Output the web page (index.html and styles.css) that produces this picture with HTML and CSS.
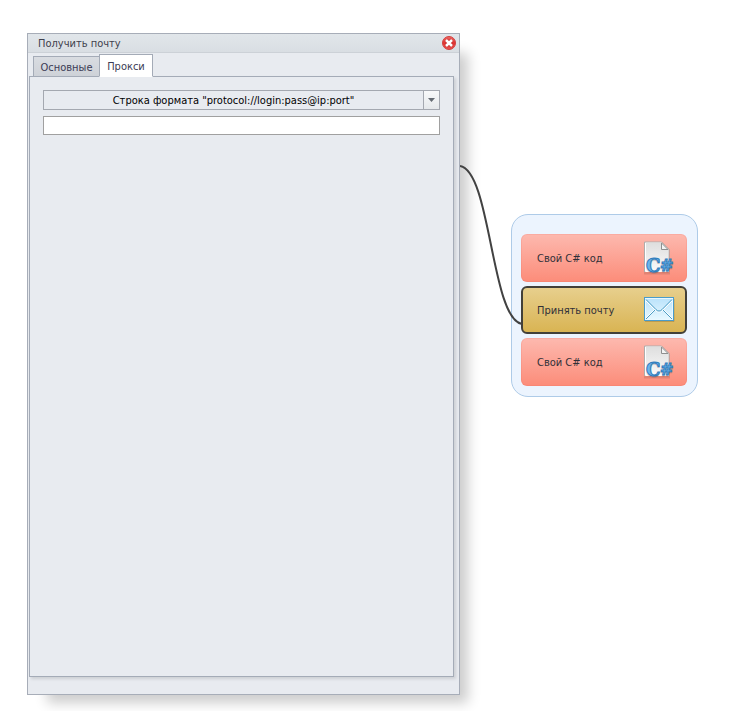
FILE: index.html
```html
<!DOCTYPE html>
<html lang="ru">
<head>
<meta charset="utf-8">
<title>Получить почту</title>
<link rel="stylesheet" href="styles.css">
</head>
<body>
<svg class="symbols" aria-hidden="true">
  <defs>
    <linearGradient id="paper" x1="0" y1="0" x2="0" y2="1">
      <stop offset="0" stop-color="#dedede"/><stop offset="1" stop-color="#fafafa"/>
    </linearGradient>
    <linearGradient id="sky" x1="0" y1="0" x2="0" y2="1">
      <stop offset="0" stop-color="#b9e2fb"/><stop offset="1" stop-color="#e9f9ff"/>
    </linearGradient>
    <linearGradient id="alarm" x1="0" y1="0" x2="0" y2="1">
      <stop offset="0" stop-color="#ee6a68"/><stop offset=".5" stop-color="#e03331"/><stop offset="1" stop-color="#ea5350"/>
    </linearGradient>
    <symbol id="code-icon" viewBox="0 0 32 34">
      <path d="M2.500 2.500H18.500L25.500 9.500V32H2.500Z" fill="none" stroke="#7a4038" stroke-opacity=".2" stroke-width="3"/>
      <path d="M2.500 1.500H18.500L25.500 8.500V30.500H2.500Z" fill="url(#paper)" stroke="#fff"/>
      <path d="M1.500 31V1H18.500L26 8.500V18" fill="none" stroke="#b0adac"/>
      <path d="M18.500 2V8.500H25Z" fill="#f4f4f4" stroke="#8f8f8f"/>
      <g class="sharp-shadow">
        <text x="3" y="32" font-size="18">C</text>
        <text x="17" y="31" font-size="16">#</text>
      </g>
      <g class="sharp-text">
        <text x="3" y="31" font-size="18">C</text>
        <text x="17" y="30" font-size="16">#</text>
      </g>
    </symbol>
    <symbol id="mail-icon" viewBox="0 0 32 28">
      <path d="M2 25.500H31V3" fill="none" stroke="#7d6430" stroke-opacity=".35"/>
      <rect x="1.500" y="1.500" width="29" height="23" fill="url(#sky)" stroke="#4a9ccb"/>
      <rect x="2.500" y="2.500" width="27" height="21" fill="none" stroke="#e9f8ff"/>
      <path d="M3 5L13 15Q14 16 16 16T19 15L29 5M3 22L11 14M29 22L21 14" fill="none" stroke="#fff"/>
      <path d="M3 3.500L13 13.500Q14 15 16 15T19 13.500L29 3.500M3 23L12 14M29 23L20 14" fill="none" stroke="#4d9dc4"/>
    </symbol>
  </defs>
</svg>

<main class="canvas">
  <section class="window" aria-labelledby="window-title">
    <header class="titlebar">
      <h1 class="title" id="window-title">Получить почту</h1>
      <button class="close" type="button" aria-label="Закрыть">
        <svg width="14" height="14" viewBox="0 0 14 14">
          <circle cx="7" cy="7" r="6.500" fill="url(#alarm)" stroke="#d0403e"/>
          <path d="M4 4L10 10M10 4L4 10" stroke="#a72020" stroke-opacity=".5" stroke-width="4"/>
          <path d="M4 4L10 10M10 4L4 10" stroke="#fff" stroke-width="2.500"/>
        </svg>
      </button>
    </header>
    <div class="tabs" role="tablist">
      <button class="tab" type="button" role="tab" aria-selected="false">Основные</button>
      <button class="tab tab-active" type="button" role="tab" aria-selected="true">Прокси</button>
    </div>
    <div class="panel" role="tabpanel">
      <div class="combo">
        <select class="combo-select" aria-label="Формат прокси">
          <option>Строка формата "protocol://login:pass@ip:port"</option>
        </select>
        <span class="combo-arrow"><svg width="7" height="4" viewBox="0 0 7 4"><path d="M0 0H7L3.500 4Z" fill="#656b73"/></svg></span>
      </div>
      <input class="field" type="text" aria-label="Прокси">
    </div>
  </section>

  <svg class="connector" viewBox="0 0 62 160" aria-hidden="true">
    <path d="M0 1C31 6 31 154 62 159" fill="none" stroke="#424242" stroke-width="2"/>
  </svg>

  <div class="group">
    <button class="node" type="button"><span class="label">Свой C# код</span><svg class="code-icon"><use href="#code-icon"/></svg></button>
    <button class="node node-selected" type="button"><span class="label">Принять почту</span><svg class="mail-icon"><use href="#mail-icon"/></svg></button>
    <button class="node" type="button"><span class="label">Свой C# код</span><svg class="code-icon"><use href="#code-icon"/></svg></button>
  </div>
</main>
</body>
</html>
```

FILE: styles.css
```css
* { box-sizing: border-box; }

body {
  margin: 0;
  background: #fff;
  font: 11px/14px Tahoma, "DejaVu Sans Condensed", "Noto Sans", sans-serif;
  color: #303038;
}

button, select, input { font: inherit; color: inherit; margin: 0; }

.symbols { position: absolute; width: 0; height: 0; }

.canvas {
  display: grid;
  grid-template-columns: minmax(0, 1fr) 51px 187px;
  align-items: start;
  min-height: 100vh;
  padding: 33px 31px 16px 27px;
}

.window {
  align-self: stretch;
  display: flex;
  flex-direction: column;
  padding: 0 5px 17px 1px;
  border: 1px solid #a7adb8;
  background: #e8ebf0;
  box-shadow: 14px 14px 12px -6px rgba(0, 0, 0, .2);
}

.titlebar {
  display: flex;
  align-items: center;
  justify-content: space-between;
  height: 19px;
  margin: 0 -5px 0 -1px;
  padding: 0 3px 0 10px;
  border-bottom: 1px solid #ccd1d7;
  background: linear-gradient(#e1e6ea, #d9dee3);
}

.title {
  margin: 0;
  padding-top: 2px;
  font-size: 11px;
  font-weight: normal;
  color: #40404c;
}

.close { display: flex; padding: 0; border: 0; background: none; }

.tabs {
  display: flex;
  align-items: flex-end;
  height: 24px;
  margin-bottom: -1px;
  padding: 0 4px;
  z-index: 1;
}

.tab {
  height: 21px;
  width: 67px;
  padding: 2px 0 0;
  border: 1px solid #a4abb7;
  background: linear-gradient(#d9dce1, #ced2d8);
  color: #3b3b55;
}

.tab-active {
  height: 23px;
  width: 54px;
  margin-left: -1px;
  border-bottom-color: #fff;
  background: #fff;
}

.panel {
  flex: 1;
  display: flex;
  flex-direction: column;
  gap: 6px;
  padding: 13px;
  border: 1px solid #a4abb7;
  box-shadow: 2px 2px 3px rgba(0, 0, 0, .12);
}

.combo {
  display: grid;
  grid-template-columns: minmax(0, 1fr) 16px;
  height: 20px;
  border: 1px solid #a4a8b0;
}

.combo-select {
  grid-area: 1 / 1 / 2 / 3;
  appearance: none;
  padding: 2px 16px 0 0;
  border: 0;
  border-radius: 0;
  background: #e8ebf0;
  color: #000;
  text-align-last: center;
}

.combo-arrow {
  grid-area: 1 / 2;
  display: flex;
  align-items: center;
  justify-content: center;
  border-left: 1px solid #a4a8b0;
  background: linear-gradient(#f8f9fa, #e5e8eb);
  pointer-events: none;
}

.field {
  height: 19px;
  padding: 0 3px;
  border: 1px solid #a0a0a0;
  background: #fff;
}

.connector {
  width: 62px;
  height: 160px;
  margin: 132px -11px 0 0;
  z-index: 1;
}

.group {
  display: flex;
  flex-direction: column;
  gap: 4px;
  margin-top: 181px;
  padding: 19px 10px 10px 9px;
  border: 1px solid #aecbe8;
  border-radius: 17px;
  background: #ecf4fe;
}

.node {
  display: flex;
  align-items: center;
  justify-content: space-between;
  height: 48px;
  padding: 0 11px 0 15px;
  border: 1px solid rgba(235, 100, 90, .15);
  border-radius: 6px;
  background: linear-gradient(#fdb9af, #fc8c79) border-box;
}

.node-selected {
  padding: 0 10px 0 14px;
  border: 2px solid #424039;
  background: linear-gradient(#e7cf8d, #d9b453);
}

.label { padding-top: 2px; }

.code-icon { width: 32px; height: 34px; }

.mail-icon { width: 32px; height: 28px; }

.sharp-text,
.sharp-shadow {
  font-family: "DejaVu Serif", serif;
  font-weight: bold;
  stroke-width: 1px;
}

.sharp-text { fill: #6db4ea; stroke: #2f7dbd; }

.sharp-shadow {
  fill: #5c4a50;
  stroke: #5c4a50;
  opacity: .3;
}
```
